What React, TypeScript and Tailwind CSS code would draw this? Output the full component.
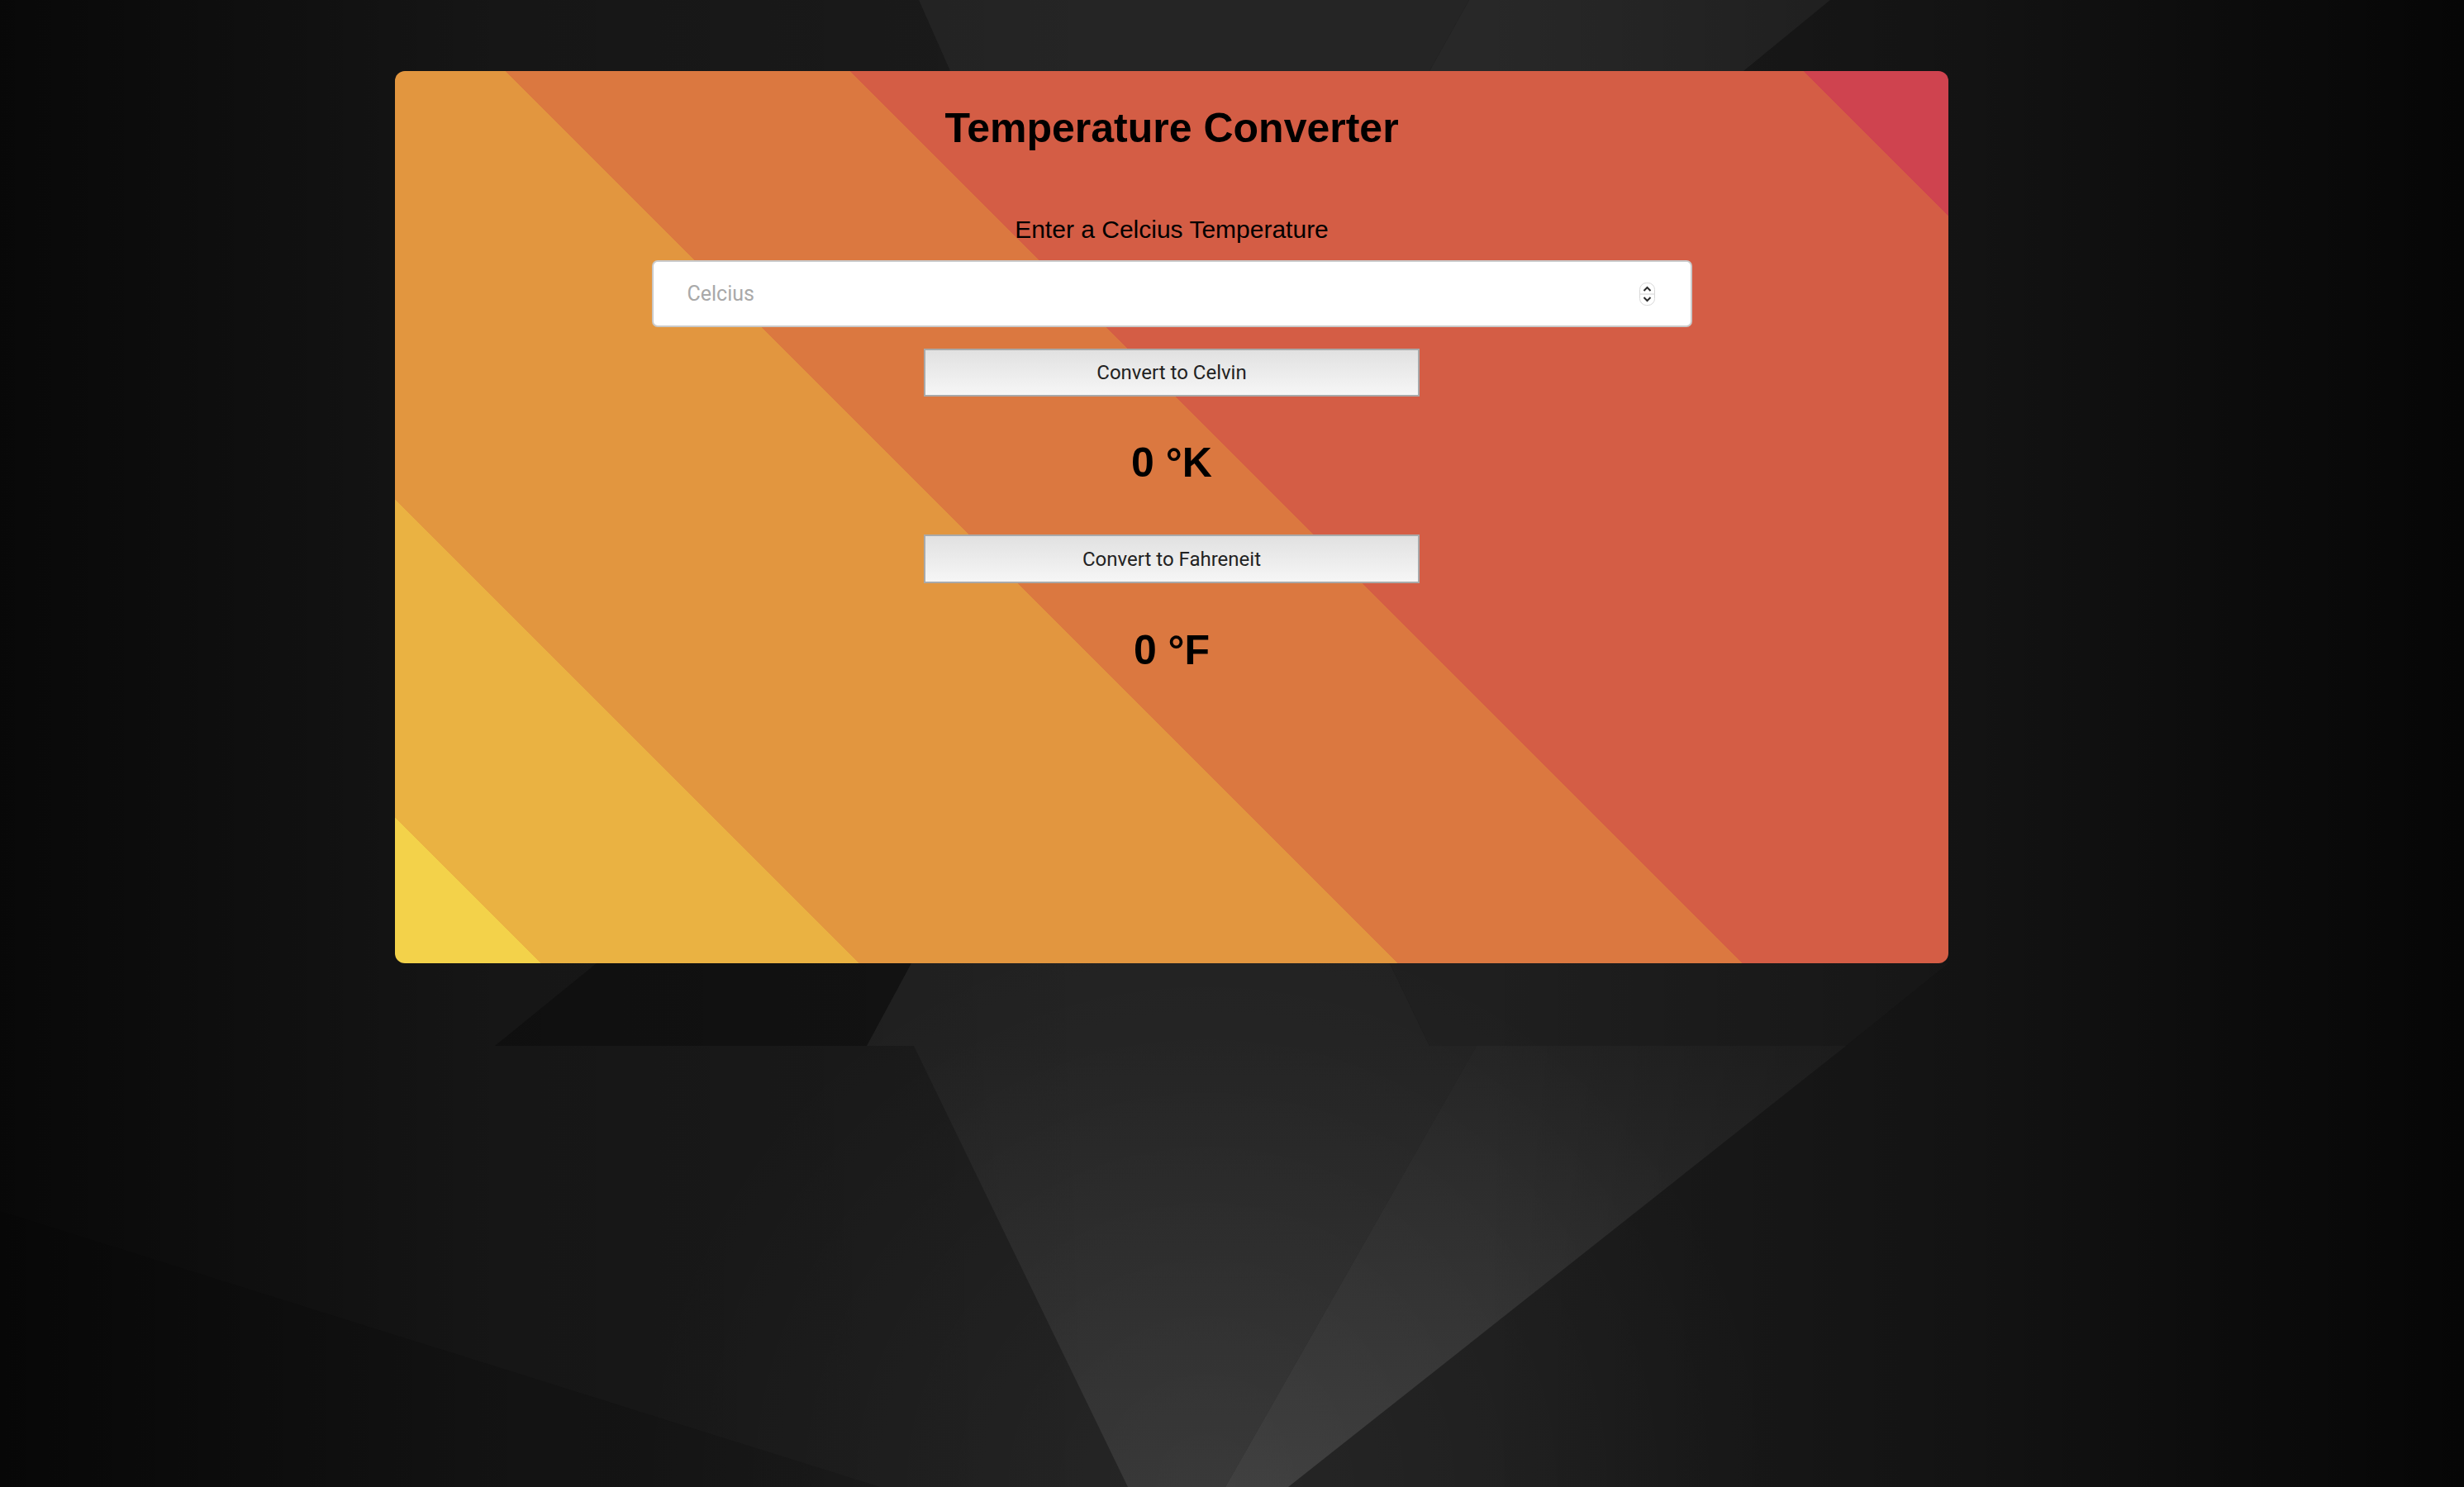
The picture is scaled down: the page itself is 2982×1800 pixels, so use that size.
import { useState } from "react";

function Backdrop() {
  return (
    <svg
      className="absolute inset-0 h-full w-full"
      viewBox="0 0 2982 1800"
      preserveAspectRatio="none"
    >
      <defs>
        <linearGradient id="cone" x1="0" y1="0" x2="0" y2="1">
          <stop offset="0" stopColor="#222222" />
          <stop offset="1" stopColor="#2f2f2f" />
        </linearGradient>
        <linearGradient id="wedge" x1="0" y1="0" x2="0" y2="1">
          <stop offset="0" stopColor="#242424" />
          <stop offset="1" stopColor="#373737" />
        </linearGradient>
        <linearGradient id="sides" x1="0" y1="0" x2="1" y2="0">
          <stop offset="0" stopColor="#000" stopOpacity="0.7" />
          <stop offset="0.2" stopColor="#000" stopOpacity="0.2" />
          <stop offset="0.45" stopColor="#000" stopOpacity="0" />
          <stop offset="0.6" stopColor="#000" stopOpacity="0" />
          <stop offset="0.8" stopColor="#000" stopOpacity="0.3" />
          <stop offset="1" stopColor="#000" stopOpacity="0.78" />
        </linearGradient>
        <radialGradient id="glow" cx="1460" cy="1800" r="700" gradientUnits="userSpaceOnUse">
          <stop offset="0" stopColor="#fff" stopOpacity="0.05" />
          <stop offset="1" stopColor="#fff" stopOpacity="0" />
        </radialGradient>
      </defs>
      <rect width="2982" height="1800" fill="#1b1b1b" />
      <polygon points="1112,0 1778,0 1730,86 1150,86" fill="#252525" />
      <polygon points="1778,0 2215,0 2110,86 1730,86" fill="#282828" />
      <polygon points="722,1166 1103,1166 1049,1266 599,1266" fill="#131313" />
      <polygon points="1103,1166 1682,1166 1730,1266 1049,1266" fill="#222222" />
      <polygon points="1682,1166 2358,1166 2234,1266 1730,1266" fill="#1f1f1f" />
      <polygon points="1106,1266 1787,1266 1483,1800 1365,1800" fill="url(#cone)" />
      <polygon points="1787,1266 2234,1266 1559,1800 1483,1800" fill="url(#wedge)" />
      <polygon points="0,1466 1065,1800 0,1800" fill="#171717" />
      <rect width="2982" height="1800" fill="url(#glow)" />
      <rect width="2982" height="1800" fill="url(#sides)" />
    </svg>
  );
}

function Spinner() {
  return (
    <svg width="19" height="28" viewBox="0 0 19 28" className="shrink-0">
      <rect x="0.5" y="0.5" width="18" height="27" rx="8" fill="#fff" stroke="#d8d8d8" />
      <line x1="1" y1="14" x2="18" y2="14" stroke="#d2d2d2" />
      <path d="M5.5 10 L9.5 6 L13.5 10" stroke="#2b2b2b" strokeWidth="2" fill="none" />
      <path d="M5.5 18 L9.5 22 L13.5 18" stroke="#2b2b2b" strokeWidth="2" fill="none" />
    </svg>
  );
}

export default function App() {
  const [celsius, setCelsius] = useState("");
  const [kelvin, setKelvin] = useState(0);
  const [fahrenheit, setFahrenheit] = useState(0);

  const value = () => {
    const n = parseFloat(celsius);
    return isNaN(n) ? 0 : n;
  };

  return (
    <div className="relative h-screen w-full overflow-hidden bg-[#161616]">
      <Backdrop />
      <div className="relative pt-[86px] pl-[478px]">
        <div className="flex h-[1080px] w-[1880px] flex-col items-center rounded-[12px] bg-[linear-gradient(45deg,#f3d24a_125px,#eab242_125px,#eab242_397px,#e2963f_397px,#e2963f_858px,#db7840_858px,#db7840_1153px,#d45d45_1153px,#d45d45_1969px,#cf434f_1969px)] pt-[44px] font-['Liberation_Sans',Arial,sans-serif] text-black">
          <h1 className="text-[50px] leading-[50px] font-bold">Temperature Converter</h1>

          <label className="mt-[83px] text-[30px] leading-[30px]">Enter a Celcius Temperature</label>

          <div className="mt-[22px] flex h-[81px] w-[1259px] items-center rounded-[7px] border-2 border-[#cacaca] bg-white pr-[43px] pl-[41px]">
            <input
              type="text"
              placeholder="Celcius"
              value={celsius}
              onChange={(e) => setCelsius(e.target.value)}
              className="min-w-0 flex-1 bg-transparent font-['Roboto',sans-serif] text-[25px] text-black outline-none placeholder:text-[#a9a9a9]"
            />
            <Spinner />
          </div>

          <button
            onClick={() => setKelvin(value() + 273.15)}
            className="mt-[26px] h-[58px] w-[600px] border-2 border-[#a9a9a9] bg-linear-to-b from-[#e1e1e1] to-[#f6f6f6] font-['Roboto',sans-serif] text-[24px] text-[#222]"
          >
            Convert to Celvin
          </button>

          <div className="mt-[55px] text-[50px] leading-[50px] font-bold">{kelvin} °K</div>

          <button
            onClick={() => setFahrenheit((value() * 9) / 5 + 32)}
            className="mt-[62px] h-[59px] w-[600px] border-2 border-[#a9a9a9] bg-linear-to-b from-[#e1e1e1] to-[#f6f6f6] font-['Roboto',sans-serif] text-[24px] text-[#222]"
          >
            Convert to Fahreneit
          </button>

          <div className="mt-[56px] text-[50px] leading-[50px] font-bold">{fahrenheit} °F</div>
        </div>
      </div>
    </div>
  );
}
